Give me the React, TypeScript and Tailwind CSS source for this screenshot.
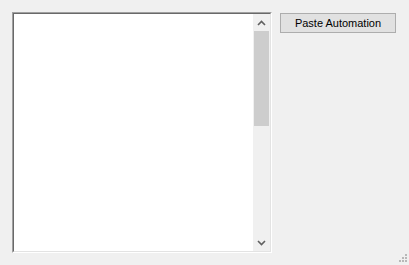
import React from "react";

function Chevron({ up }: { up?: boolean }) {
  return (
    <svg width="9" height="6" viewBox="0 0 9 6">
      <path
        d={up ? "M1 5 L4.5 1.5 L8 5" : "M1 1 L4.5 4.5 L8 1"}
        fill="none"
        stroke="#606060"
        strokeWidth="1.6"
      />
    </svg>
  );
}

export default function App() {
  return (
    <div
      className="w-[409px] h-[265px] bg-[#f0f0f0] relative flex items-start pt-[12px] pl-[12px]"
      style={{ fontFamily: '"Liberation Sans", Arial, sans-serif' }}
    >
      <div className="w-[260px] h-[241px] border border-t-[#a0a0a0] border-l-[#a0a0a0] border-b-white border-r-white">
        <div className="w-full h-full border border-t-[#696969] border-l-[#696969] border-b-[#e3e3e3] border-r-[#e3e3e3] bg-white flex">
          <div className="flex-1" />
          <div className="w-[17px] h-full bg-[#f0f0f0] flex flex-col">
            <div className="h-[17px] flex items-center justify-center">
              <Chevron up />
            </div>
            <div className="h-[95px] mx-[1px] bg-[#cdcdcd]" />
            <div className="flex-1" />
            <div className="h-[17px] flex items-center justify-center">
              <Chevron />
            </div>
          </div>
        </div>
      </div>
      <button className="ml-[8px] mt-[1px] w-[116px] h-[20px] bg-[#e1e1e1] border border-[#adadad] text-[11px] text-black leading-none flex items-center justify-center">
        Paste Automation
      </button>
      <svg className="absolute right-[2px] bottom-[2px]" width="10" height="10" viewBox="0 0 10 10">
        {[
          [8, 0], [8, 3], [8, 6], [5, 3], [5, 6], [2, 6],
        ].map(([x, y], i) => (
          <rect key={i} x={x} y={y + 1} width="2" height="2" fill="#b8b8b8" />
        ))}
      </svg>
    </div>
  );
}
